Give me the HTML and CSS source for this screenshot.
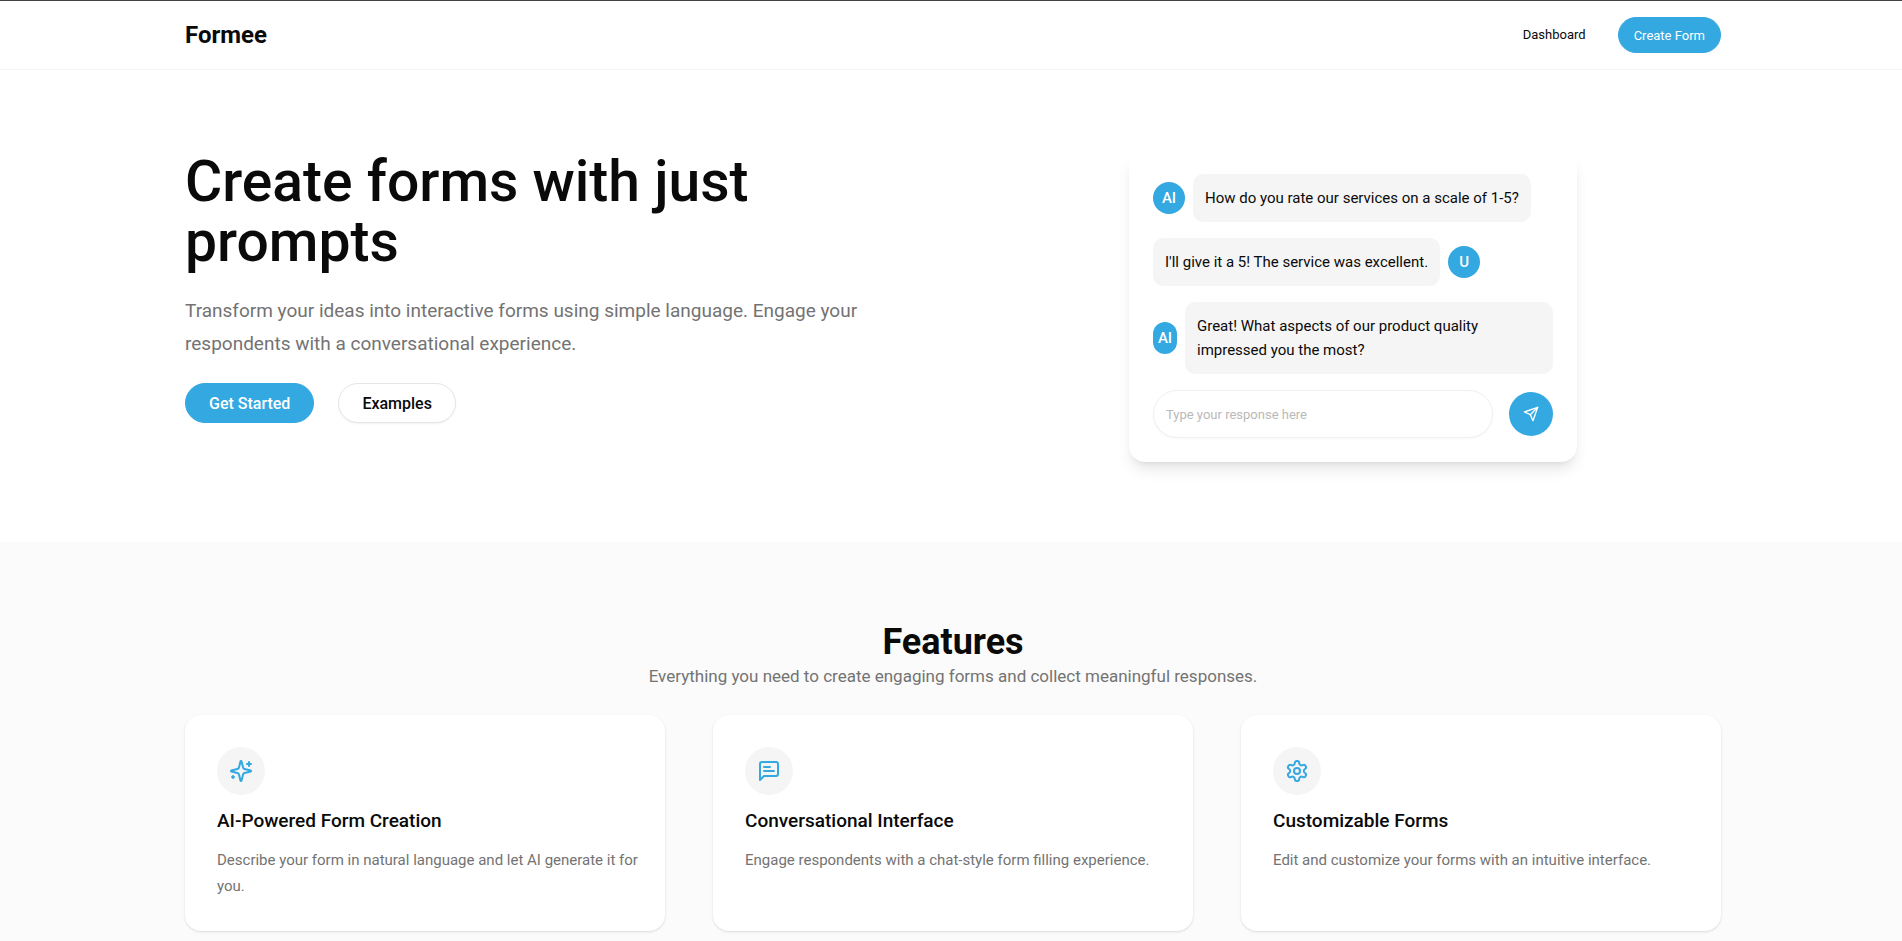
FILE: index.html
```html
<!DOCTYPE html>
<html lang="en">
<head>
    <meta charset="UTF-8">
    <meta name="viewport" content="width=device-width, initial-scale=1.0">
    <title>Formee</title>
    <link rel="stylesheet" href="styles.css">
</head>
<body>
    <header class="header">
        <div class="container header-inner">
            <a href="#" class="logo">Formee</a>
            <nav class="nav">
                <a href="#" class="nav-link">Dashboard</a>
                <button type="button" class="btn btn-primary btn-small">Create Form</button>
            </nav>
        </div>
    </header>

    <main>
        <section class="hero">
            <div class="container hero-grid">
                <div class="hero-text">
                    <h1>Create forms with just prompts</h1>
                    <p class="hero-lead">Transform your ideas into interactive forms using simple language. Engage your respondents with a conversational experience.</p>
                    <div class="hero-buttons">
                        <button type="button" class="btn btn-primary">Get Started</button>
                        <button type="button" class="btn btn-outline">Examples</button>
                    </div>
                </div>

                <div class="chat">
                    <div class="message">
                        <span class="avatar">AI</span>
                        <p class="bubble">How do you rate our services on a scale of 1-5?</p>
                    </div>
                    <div class="message">
                        <p class="bubble">I'll give it a 5! The service was excellent.</p>
                        <span class="avatar">U</span>
                    </div>
                    <div class="message">
                        <span class="avatar avatar-narrow">AI</span>
                        <p class="bubble bubble-wide">Great! What aspects of our product quality impressed you the most?</p>
                    </div>
                    <form class="chat-form">
                        <input type="text" class="chat-input" placeholder="Type your response here" aria-label="Your response">
                        <button type="button" class="send" aria-label="Send">
                            <svg width="16" height="16" viewBox="0 0 24 24" fill="none" stroke="currentColor" stroke-width="2" stroke-linecap="round" stroke-linejoin="round">
                                <path d="m22 2-7 20-4-9-9-4Z"/>
                                <path d="M22 2 11 13"/>
                            </svg>
                        </button>
                    </form>
                </div>
            </div>
        </section>

        <section class="features">
            <div class="container">
                <h2>Features</h2>
                <p class="features-lead">Everything you need to create engaging forms and collect meaningful responses.</p>
                <div class="cards">
                    <article class="card">
                        <div class="card-icon">
                            <svg width="24" height="24" viewBox="0 0 24 24" fill="none" stroke="currentColor" stroke-width="2" stroke-linecap="round" stroke-linejoin="round">
                                <path d="M9.937 15.5A2 2 0 0 0 8.5 14.063l-6.135-1.582a.5.5 0 0 1 0-.962L8.5 9.936A2 2 0 0 0 9.937 8.5l1.582-6.135a.5.5 0 0 1 .963 0L14.063 8.5A2 2 0 0 0 15.5 9.937l6.135 1.581a.5.5 0 0 1 0 .964L15.5 14.063a2 2 0 0 0-1.437 1.437l-1.582 6.135a.5.5 0 0 1-.963 0z"/>
                                <path d="M20 3v4M22 5h-4"/>
                                <path d="M4 17v2M5 18H3"/>
                            </svg>
                        </div>
                        <h3>AI-Powered Form Creation</h3>
                        <p>Describe your form in natural language and let AI generate it for you.</p>
                    </article>
                    <article class="card">
                        <div class="card-icon">
                            <svg width="24" height="24" viewBox="0 0 24 24" fill="none" stroke="currentColor" stroke-width="2" stroke-linecap="round" stroke-linejoin="round">
                                <path d="M21 15a2 2 0 0 1-2 2H7l-4 4V5a2 2 0 0 1 2-2h14a2 2 0 0 1 2 2z"/>
                                <path d="M13 8H7M17 12H7"/>
                            </svg>
                        </div>
                        <h3>Conversational Interface</h3>
                        <p>Engage respondents with a chat-style form filling experience.</p>
                    </article>
                    <article class="card">
                        <div class="card-icon">
                            <svg width="24" height="24" viewBox="0 0 24 24" fill="none" stroke="currentColor" stroke-width="2" stroke-linecap="round" stroke-linejoin="round">
                                <path d="M12.22 2h-.44a2 2 0 0 0-2 2v.18a2 2 0 0 1-1 1.73l-.43.25a2 2 0 0 1-2 0l-.15-.08a2 2 0 0 0-2.73.73l-.22.38a2 2 0 0 0 .73 2.73l.15.1a2 2 0 0 1 1 1.72v.51a2 2 0 0 1-1 1.74l-.15.09a2 2 0 0 0-.73 2.73l.22.38a2 2 0 0 0 2.73.73l.15-.08a2 2 0 0 1 2 0l.43.25a2 2 0 0 1 1 1.73V20a2 2 0 0 0 2 2h.44a2 2 0 0 0 2-2v-.18a2 2 0 0 1 1-1.73l.43-.25a2 2 0 0 1 2 0l.15.08a2 2 0 0 0 2.73-.73l.22-.39a2 2 0 0 0-.73-2.73l-.15-.08a2 2 0 0 1-1-1.74v-.5a2 2 0 0 1 1-1.74l.15-.09a2 2 0 0 0 .73-2.73l-.22-.38a2 2 0 0 0-2.73-.73l-.15.08a2 2 0 0 1-2 0l-.43-.25a2 2 0 0 1-1-1.73V4a2 2 0 0 0-2-2z"/>
                                <circle cx="12" cy="12" r="3"/>
                            </svg>
                        </div>
                        <h3>Customizable Forms</h3>
                        <p>Edit and customize your forms with an intuitive interface.</p>
                    </article>
                </div>
            </div>
        </section>
    </main>
</body>
</html>
```

FILE: styles.css
```css
* {
    box-sizing: border-box;
}

body {
    margin: 0;
    background-color: #fff;
    border-top: 1px solid #444;
    color: #0a0a0a;
    font-family: "Roboto", "Liberation Sans", sans-serif;
    font-size: 15px;
    line-height: 24px;
}

h1, h2, h3, p {
    margin: 0;
}

.container {
    max-width: 1604px;
    margin: 0 auto;
    padding: 0 32px 0 36px;
}

/* header */
.header {
    border-bottom: 1px solid #f4f4f5;
}

.header-inner {
    display: flex;
    align-items: center;
    justify-content: space-between;
    padding-top: 16px;
    padding-bottom: 16px;
}

.logo {
    color: inherit;
    font-size: 24px;
    font-weight: 700;
    line-height: 32px;
    text-decoration: none;
}

.nav {
    display: flex;
    align-items: center;
    gap: 32px;
}

.nav-link {
    color: inherit;
    font-size: 13px;
    text-decoration: none;
}

/* buttons */
.btn {
    height: 40px;
    padding: 0 23px;
    border: 1px solid transparent;
    border-radius: 20px;
    font-family: inherit;
    font-size: 16px;
    font-weight: 500;
    white-space: nowrap;
    cursor: pointer;
}

.btn-primary {
    background-color: #34a8e1;
    border-color: #34a8e1;
    color: #fff;
}

.btn-outline {
    background-color: #fff;
    border-color: #e5e5e5;
    color: #0a0a0a;
    box-shadow: 0 1px 2px rgba(0, 0, 0, 0.05);
}

.btn-small {
    height: 36px;
    padding: 0 15px;
    font-size: 13px;
    font-weight: 400;
}

/* hero */
.hero {
    padding: 80px 0;
}

.hero-grid {
    display: grid;
    grid-template-columns: 1fr 1fr;
    gap: 64px;
}

.hero-text {
    padding-top: 2px;
}

h1 {
    font-size: 57px;
    font-weight: 500;
    line-height: 60px;
}

.hero-lead {
    margin-top: 22px;
    color: #737373;
    font-size: 19px;
    line-height: 33px;
}

.hero-buttons {
    display: flex;
    gap: 24px;
    margin-top: 23px;
}

/* chat preview */
.chat {
    display: flex;
    flex-direction: column;
    gap: 16px;
    width: 100%;
    max-width: 448px;
    margin: 0 auto;
    padding: 24px;
    border-radius: 16px;
    background-color: #fff;
    box-shadow: 0 10px 15px -3px rgba(0, 0, 0, 0.1), 0 4px 6px -4px rgba(0, 0, 0, 0.1);
}

.message {
    display: flex;
    align-items: center;
    gap: 8px;
}

.avatar {
    display: flex;
    align-items: center;
    justify-content: center;
    flex-shrink: 0;
    width: 32px;
    height: 32px;
    border-radius: 16px;
    background-color: #34a8e1;
    color: #fff;
    font-weight: 500;
}

.avatar-narrow {
    width: 24px;
}

.bubble {
    padding: 12px;
    border-radius: 10px;
    background-color: #f5f5f5;
}

.bubble-wide {
    flex: 1;
}

.chat-form {
    display: flex;
    align-items: center;
    gap: 16px;
}

.chat-input {
    flex: 1;
    min-width: 0;
    height: 48px;
    padding: 0 12px;
    border: 1px solid #f0f0f0;
    border-radius: 24px;
    background-color: #fff;
    color: inherit;
    font-family: inherit;
    font-size: 13px;
    box-shadow: 0 1px 2px rgba(0, 0, 0, 0.03);
}

.chat-input::placeholder {
    color: #b9b9b9;
}

.send {
    display: flex;
    align-items: center;
    justify-content: center;
    width: 44px;
    height: 44px;
    padding: 0;
    border: none;
    border-radius: 50%;
    background-color: #34a8e1;
    color: #fff;
    cursor: pointer;
}

/* features */
.features {
    padding: 80px 0;
    background-color: #fbfbfb;
    text-align: center;
}

h2 {
    font-size: 36px;
    font-weight: 700;
    line-height: 40px;
}

.features-lead {
    color: #737373;
    font-size: 17px;
    line-height: 29px;
}

.cards {
    display: grid;
    grid-template-columns: repeat(3, 1fr);
    gap: 48px;
    margin-top: 24px;
    text-align: left;
}

.card {
    padding: 32px 24px 32px 32px;
    border-radius: 16px;
    background-color: #fff;
    box-shadow: 0 1px 3px rgba(0, 0, 0, 0.1), 0 1px 2px -1px rgba(0, 0, 0, 0.1);
}

.card-icon {
    display: flex;
    align-items: center;
    justify-content: center;
    width: 48px;
    height: 48px;
    border-radius: 50%;
    background-color: #f5f5f5;
    color: #34a8e1;
}

.card h3 {
    margin: 12px 0;
    font-size: 19px;
    font-weight: 500;
    line-height: 28px;
}

.card p {
    color: #737373;
    line-height: 26px;
}

@media (max-width: 900px) {
    .hero-grid,
    .cards {
        grid-template-columns: 1fr;
    }
}
```
